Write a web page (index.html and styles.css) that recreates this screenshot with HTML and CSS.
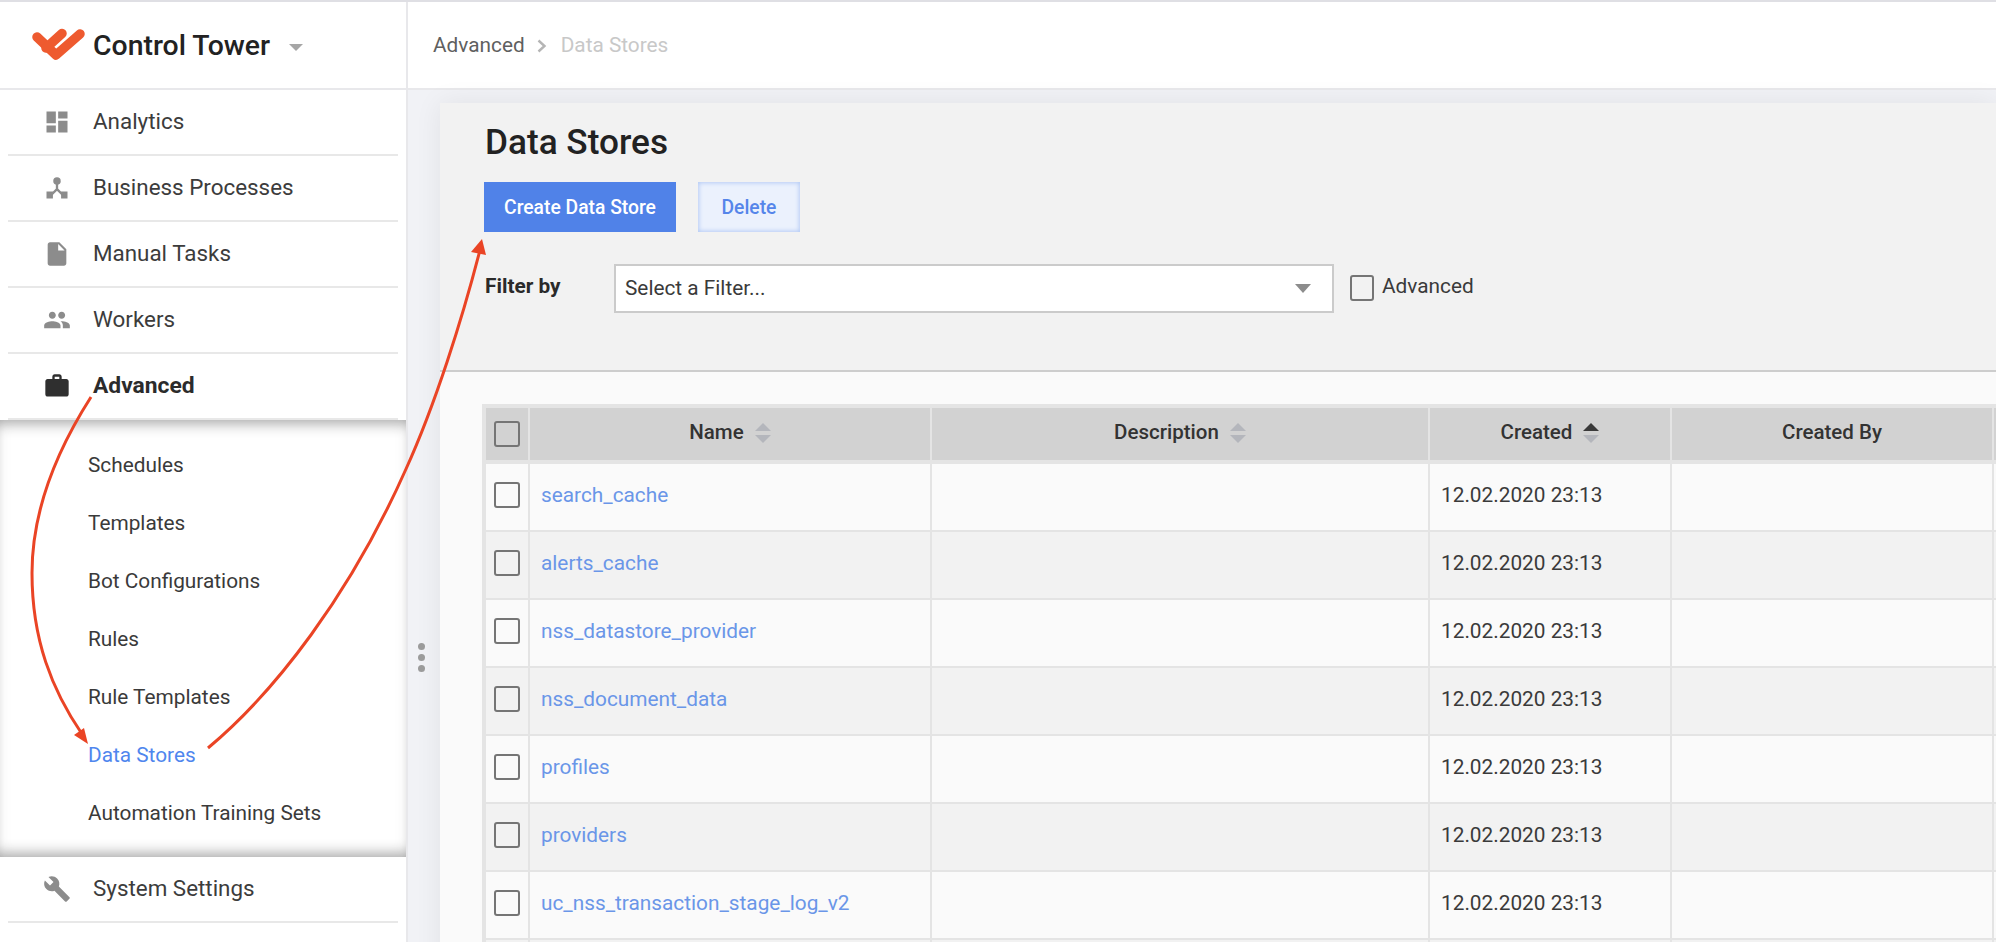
FILE: index.html
```html
<!DOCTYPE html>
<html lang="en">
<head>
    <meta charset="UTF-8">
    <title>Control Tower - Data Stores</title>
    <link rel="stylesheet" href="styles.css">
</head>
<body>
    <div class="app">
        <aside class="sidebar">
            <div class="brand">
                <svg class="logo" viewBox="30 26 56 36" width="56" height="36">
                    <path d="M37 36 L56 54 L80 33" fill="none" stroke="#ee5a2f" stroke-width="9.5" stroke-linecap="round" stroke-linejoin="round"/>
                    <path d="M46 47 L62 32.500" fill="none" stroke="#ee5a2f" stroke-width="9.5" stroke-linecap="round"/>
                </svg>
                <span class="brand-name">Control Tower</span>
                <span class="brand-caret"></span>
            </div>
            <nav>
                <div class="nav-row">
                    <svg class="nav-icon" viewBox="0 0 24 24"><path d="M3 13h8V3H3v10zm0 8h8v-6H3v6zm10 0h8V11h-8v10zm0-18v6h8V3h-8z"/></svg>
                    <span>Analytics</span>
                </div>
                <div class="nav-row">
                    <svg class="nav-icon" viewBox="0 0 24 24"><circle cx="12" cy="6" r="3.200"/><path d="M3 15h5.500v6H3zM15.500 15H21v6h-5.500z"/><path d="M12 8v5M12 13l-5 5M12 13l5 5" fill="none" stroke="#8c8c8c" stroke-width="2"/></svg>
                    <span>Business Processes</span>
                </div>
                <div class="nav-row">
                    <svg class="nav-icon" viewBox="0 0 24 24"><path d="M6 2c-1.100 0-1.990.9-1.990 2L4 20c0 1.100.89 2 1.990 2H18c1.100 0 2-.9 2-2V8l-6-6H6zm7 7V3.500L18.500 9H13z"/></svg>
                    <span>Manual Tasks</span>
                </div>
                <div class="nav-row">
                    <svg class="nav-icon" viewBox="0 0 24 24"><path d="M16 11c1.660 0 2.990-1.340 2.990-3S17.660 5 16 5c-1.660 0-3 1.340-3 3s1.340 3 3 3zm-8 0c1.660 0 2.990-1.340 2.990-3S9.660 5 8 5C6.340 5 5 6.340 5 8s1.340 3 3 3zm0 2c-2.330 0-7 1.170-7 3.500V19h14v-2.500c0-2.330-4.670-3.500-7-3.500zm8 0c-.29 0-.62.02-.97.05 1.160.84 1.970 1.970 1.970 3.450V19h6v-2.500c0-2.330-4.670-3.500-7-3.500z"/></svg>
                    <span>Workers</span>
                </div>
                <div class="nav-row active">
                    <svg class="nav-icon" viewBox="0 0 24 24"><path d="M20 6h-4V4c0-1.110-.89-2-2-2h-4c-1.110 0-2 .89-2 2v2H4c-1.110 0-1.990.89-1.990 2L2 19c0 1.110.89 2 2 2h16c1.110 0 2-.89 2-2V8c0-1.110-.89-2-2-2zm-6 0h-4V4h4v2z"/></svg>
                    <span>Advanced</span>
                </div>
                <div class="submenu">
                    <div class="sub-item">Schedules</div>
                    <div class="sub-item">Templates</div>
                    <div class="sub-item">Bot Configurations</div>
                    <div class="sub-item">Rules</div>
                    <div class="sub-item">Rule Templates</div>
                    <div class="sub-item current">Data Stores</div>
                    <div class="sub-item">Automation Training Sets</div>
                </div>
                <div class="nav-row">
                    <svg class="nav-icon" viewBox="0 0 24 24"><path d="M22.700 19l-9.100-9.100c.9-2.300.4-5-1.500-6.900-2-2-5-2.400-7.400-1.300L9 6 6 9 1.600 4.700C.4 7.100.9 10.100 2.900 12.100c1.900 1.900 4.600 2.400 6.900 1.500l9.100 9.100c.4.4 1 .4 1.400 0l2.300-2.300c.5-.4.5-1.100.1-1.400z"/></svg>
                    <span>System Settings</span>
                </div>
            </nav>
        </aside>

        <main class="main">
            <div class="breadcrumb">
                <span>Advanced</span>
                <svg class="crumb-sep" viewBox="0 0 10 14" width="10" height="14"><path d="M1.500 1.500 L7.500 7 L1.500 12.500" fill="none" stroke="#b5b5b5" stroke-width="2.400"/></svg>
                <span class="crumb-current">Data Stores</span>
            </div>
            <div class="splitter"><i></i><i></i><i></i></div>

            <section class="panel">
                <div class="panel-head">
                    <h1>Data Stores</h1>
                    <div class="actions">
                        <button class="btn btn-primary">Create Data Store</button>
                        <button class="btn btn-soft">Delete</button>
                    </div>
                    <div class="filters">
                        <label class="filter-label">Filter by</label>
                        <div class="select">
                            Select a Filter...
                            <span class="select-arrow"></span>
                        </div>
                        <span class="check check-tall"></span>
                        <span class="check-label">Advanced</span>
                    </div>
                </div>
                <div class="panel-body">
                    <table class="grid">
                        <colgroup>
                            <col class="c-check"><col class="c-name"><col class="c-desc"><col class="c-created"><col class="c-by"><col>
                        </colgroup>
                        <thead>
                            <tr>
                                <th><span class="check"></span></th>
                                <th>Name <span class="sort"></span></th>
                                <th>Description <span class="sort"></span></th>
                                <th>Created <span class="sort asc"></span></th>
                                <th>Created By</th>
                                <th></th>
                            </tr>
                        </thead>
                        <tbody>
                            <tr><td><span class="check"></span></td><td><a>search_cache</a></td><td></td><td>12.02.2020 23:13</td><td></td><td></td></tr>
                            <tr><td><span class="check"></span></td><td><a>alerts_cache</a></td><td></td><td>12.02.2020 23:13</td><td></td><td></td></tr>
                            <tr><td><span class="check"></span></td><td><a>nss_datastore_provider</a></td><td></td><td>12.02.2020 23:13</td><td></td><td></td></tr>
                            <tr><td><span class="check"></span></td><td><a>nss_document_data</a></td><td></td><td>12.02.2020 23:13</td><td></td><td></td></tr>
                            <tr><td><span class="check"></span></td><td><a>profiles</a></td><td></td><td>12.02.2020 23:13</td><td></td><td></td></tr>
                            <tr><td><span class="check"></span></td><td><a>providers</a></td><td></td><td>12.02.2020 23:13</td><td></td><td></td></tr>
                            <tr><td><span class="check"></span></td><td><a>uc_nss_transaction_stage_log_v2</a></td><td></td><td>12.02.2020 23:13</td><td></td><td></td></tr>
                            <tr><td></td><td></td><td></td><td></td><td></td><td></td></tr>
                        </tbody>
                    </table>
                </div>
            </section>
        </main>

        <!-- red annotation arrows drawn over the screenshot -->
        <svg class="arrows" viewBox="0 0 1996 942" width="1996" height="942">
            <path class="arrow-line" d="M91 397 C52 458 32 515 32 573 C32 640 52 690 82 734"/>
            <path class="arrow-head" d="M88 744 L74 735 L84 728 Z"/>
            <path class="arrow-line" d="M208 748 C275 692 350 595 406 469 C435 405 462 320 480 250"/>
            <path class="arrow-head" d="M482 239 L471 252 L486 255 Z"/>
        </svg>
    </div>
</body>
</html>
```

FILE: styles.css
```css
html, body {
    margin: 0;
    padding: 0;
    height: 100%;
    overflow: hidden;
}
body {
    font-family: Roboto, "Liberation Sans", sans-serif;
    font-size: 20.800px;
    color: #333;
    background: #fff;
}
.app {
    position: relative;
    display: flex;
    height: 940px;
    border-top: 2px solid #dfdfe4;
    overflow: hidden;
}

/* sidebar */
.sidebar {
    flex: 0 0 406px;
    border-right: 2px solid #e8e8eb;
    background: #fff;
}
.brand {
    display: flex;
    align-items: center;
    height: 86px;
    border-bottom: 2px solid #e8e8eb;
    padding-left: 30px;
}
.logo {
    margin-right: 7px;
}
.brand-name {
    font-size: 28.400px;
    font-weight: 500;
    color: #222;
}
.brand-caret {
    margin: 4px 0 0 19px;
    border-left: 7px solid transparent;
    border-right: 7px solid transparent;
    border-top: 7px solid #a6a6a6;
}
.nav-row {
    display: flex;
    align-items: center;
    gap: 22px;
    height: 64px;
    margin: 0 8px;
    padding-left: 35px;
    border-bottom: 2px solid #e8e8e8;
    font-size: 22.400px;
    color: #3c3c3c;
}
.nav-row span {
    margin-top: -2px;
}
.nav-icon {
    width: 28px;
    height: 28px;
    fill: #8c8c8c;
    flex: none;
}
.nav-row.active {
    font-weight: 700;
    font-size: 22.800px;
    color: #2b2b2b;
}
.nav-row.active .nav-icon {
    fill: #2f2f2f;
}
.submenu {
    padding: 16px 0 15px;
    box-shadow: inset 0 14px 14px -10px rgba(0, 0, 0, 0.3), inset 0 -14px 14px -10px rgba(0, 0, 0, 0.3), inset 0 0 14px rgba(0, 0, 0, 0.07);
}
.sub-item {
    height: 58px;
    line-height: 58px;
    padding-left: 88px;
    color: #3a3a3a;
}
.sub-item.current {
    color: #4f86ee;
}

/* main area */
.main {
    position: relative;
    flex: 1;
    min-width: 0;
    background: #f1f2f6;
}
.breadcrumb {
    display: flex;
    align-items: center;
    height: 86px;
    padding-left: 25px;
    background: #fff;
    border-bottom: 2px solid #e8e8eb;
    color: #5f5f5f;
}
.crumb-sep {
    margin: 2px 14px 0 12px;
}
.crumb-current {
    color: #c8c8c8;
}
.splitter {
    position: absolute;
    left: 10px;
    top: 641px;
    display: flex;
    flex-direction: column;
    gap: 4px;
}
.splitter i {
    width: 7px;
    height: 7px;
    border-radius: 50%;
    background: #9b9b9b;
}
.panel {
    margin: 13px 0 0 32px;
    background: #f2f2f2;
    box-shadow: 0 0 26px rgba(0, 0, 0, 0.07);
}
.panel-head {
    height: 267px;
    padding-left: 44px;
    border-bottom: 2px solid #cdcdcd;
    overflow: hidden;
}
h1 {
    margin: 20px 0 0 1px;
    font-size: 35.200px;
    line-height: 38px;
    font-weight: 500;
    color: #222;
}
.actions {
    display: flex;
    gap: 22px;
    margin-top: 21px;
}
.btn {
    height: 50px;
    border: none;
    font-family: inherit;
    font-size: 19.300px;
    font-weight: 500;
}
.btn-primary {
    width: 192px;
    background: #5082e8;
    color: #fff;
}
.btn-soft {
    width: 102px;
    background: #ebf1fd;
    color: #5585ea;
    box-shadow: inset 0 0 4px 1px #b4caf5;
}
.filters {
    display: flex;
    align-items: center;
    margin-top: 32px;
}
.filter-label {
    flex: 0 0 129px;
    padding-left: 1px;
    margin-top: -6px;
    font-weight: 700;
    color: #2a2a2a;
}
.select {
    position: relative;
    box-sizing: border-box;
    width: 720px;
    height: 49px;
    line-height: 45px;
    padding-left: 9px;
    background: #fff;
    border: 2px solid #cbcbcb;
    color: #3a3a3a;
}
.select-arrow {
    position: absolute;
    right: 21px;
    top: 18px;
    border-left: 8px solid transparent;
    border-right: 8px solid transparent;
    border-top: 9px solid #8c8c8c;
}
.check {
    display: inline-block;
    box-sizing: border-box;
    width: 26px;
    height: 26px;
    border: 2px solid #757575;
    border-radius: 3px;
    vertical-align: middle;
}
.check-tall {
    width: 24px;
    margin: -2px 8px 0 16px;
}
.check-label {
    margin-top: -6px;
    color: #3a3a3a;
}

/* table */
.panel-body {
    background: #fafafa;
    padding: 32px 0 0 42px;
}
.grid {
    table-layout: fixed;
    width: 1700px;
    border-collapse: separate;
    border-spacing: 0;
    border-top: 4px solid #e4e4e4;
    border-left: 4px solid #e4e4e4;
}
.c-check { width: 44px; }
.c-name { width: 402px; }
.c-desc { width: 498px; }
.c-created { width: 242px; }
.c-by { width: 322px; }
.grid th {
    box-sizing: border-box;
    height: 56px;
    padding: 0 0 4px;
    background: #d2d2d2;
    border-right: 2px solid #e4e4e4;
    border-bottom: 4px solid #e4e4e4;
    font-size: 20.500px;
    font-weight: 500;
    color: #333;
}
.grid th .check {
    margin-top: 4px;
}
.grid td {
    box-sizing: border-box;
    height: 68px;
    padding: 0 11px 4px;
    background: #fafafa;
    border-right: 2px solid #e4e4e4;
    border-bottom: 2px solid #e4e4e4;
    color: #3a3a3a;
}
.grid tbody tr:nth-child(even) td {
    background: #f2f2f2;
}
.grid td:first-child {
    padding: 0 0 4px 8px;
}
.grid a {
    color: #6a96e8;
}
.sort {
    display: inline-block;
    position: relative;
    width: 16px;
    height: 22px;
    margin-left: 6px;
    vertical-align: middle;
}
.sort::before, .sort::after {
    content: "";
    position: absolute;
    left: 0;
    border-left: 8px solid transparent;
    border-right: 8px solid transparent;
}
.sort::before {
    top: 1px;
    border-bottom: 8px solid #b4b6bc;
}
.sort::after {
    bottom: 1px;
    border-top: 8px solid #b4b6bc;
}
.sort.asc::before {
    border-bottom-color: #3a3a3a;
}

/* annotation overlay */
.arrows {
    position: absolute;
    left: 0;
    top: -2px;
    pointer-events: none;
}
.arrow-line {
    fill: none;
    stroke: #ea4425;
    stroke-width: 3;
}
.arrow-head {
    fill: #ea4425;
}
```
